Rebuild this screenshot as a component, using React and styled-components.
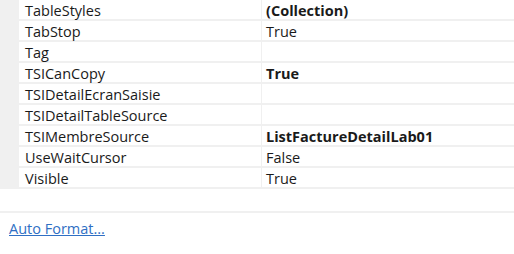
import React from 'react';
import styled, { createGlobalStyle } from 'styled-components';

const GlobalStyle = createGlobalStyle`
    body {
        margin: 0;
        background: #ffffff;
        font-family: 'Open Sans', 'Noto Sans', sans-serif;
    }
`;

const Panel = styled.div`
    width: 514px;
    height: 254px;
    background: #ffffff;
    color: #1a1a1a;
    font-size: 14.5px;
    overflow: hidden;
`;

const Grid = styled.div`
    display: flex;
    flex-direction: column;
`;

const Row = styled.div`
    display: grid;
    grid-template-columns: 19px 243px 1fr;
    height: 21px;
    box-sizing: border-box;
    border-bottom: 2px solid #f0f0f0;
`;

const Gutter = styled.div`
    background: #f0f0f0;
`;

const Name = styled.div`
    display: flex;
    align-items: center;
    padding: 1px 0 0 6px;
    border-right: 1px solid #f0f0f0;
    white-space: nowrap;
`;

const Value = styled.div`
    display: flex;
    align-items: center;
    padding: 1px 0 0 4px;
    font-weight: ${(p) => (p.$bold ? 700 : 400)};
    white-space: nowrap;
`;

const Blank = styled.div`
    height: 22px;
    border-bottom: 2px solid #f0f0f0;
`;

const Footer = styled.div`
    padding: 6px 0 0 9px;
`;

const FormatLink = styled.a`
    color: #2f6fc4;
    text-decoration: underline;
    font-size: 14.5px;
    cursor: pointer;
`;

const props = [
    { name: 'TableStyles', value: '(Collection)', bold: true },
    { name: 'TabStop', value: 'True' },
    { name: 'Tag', value: '' },
    { name: 'TSICanCopy', value: 'True', bold: true },
    { name: 'TSIDetailEcranSaisie', value: '' },
    { name: 'TSIDetailTableSource', value: '' },
    { name: 'TSIMembreSource', value: 'ListFactureDetailLab01', bold: true },
    { name: 'UseWaitCursor', value: 'False' },
    { name: 'Visible', value: 'True' },
];

export default function App() {
    return (
        <Panel>
            <GlobalStyle />
            <Grid>
                {props.map((p) => (
                    <Row key={p.name}>
                        <Gutter />
                        <Name>{p.name}</Name>
                        <Value $bold={p.bold}>{p.value}</Value>
                    </Row>
                ))}
            </Grid>
            <Blank />
            <Footer>
                <FormatLink>Auto Format...</FormatLink>
            </Footer>
        </Panel>
    );
}
